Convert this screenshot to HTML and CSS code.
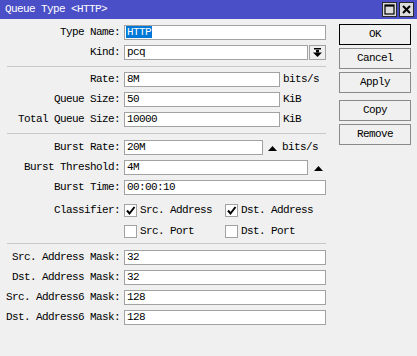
FILE: index.html
```html
<!DOCTYPE html>
<html>
<head>
<meta charset="utf-8">
<link rel="stylesheet" href="styles.css">
</head>
<body>
<div class="window">
  <div class="titlebar">
    <span class="title">Queue Type &lt;HTTP&gt;</span>
    <div class="tb-buttons">
      <span class="tb-btn"><svg width="11" height="11" viewBox="0 0 11 11"><rect x="1" y="1" width="9" height="9" fill="none" stroke="#000" stroke-width="1.2"/><rect x="1" y="1" width="9" height="1.6" fill="#000"/></svg></span>
      <span class="tb-btn"><svg width="11" height="11" viewBox="0 0 11 11"><path d="M2 2 L9 9 M9 2 L2 9" stroke="#000" stroke-width="2"/></svg></span>
    </div>
  </div>
  <div class="content">
    <div class="form">
      <div class="section s1">
        <div class="row"><span class="label">Type Name:</span><div class="input w-full pad-sel"><span class="sel">HTTP</span></div></div>
        <div class="row"><span class="label">Kind:</span><div class="input w-kind">pcq</div><div class="dd-btn"><svg width="9" height="9" viewBox="0 0 9 9"><rect x="1" y="0" width="7" height="1.5" fill="#000"/><rect x="3" y="2" width="3" height="2.5" fill="#000"/><polygon points="0,4.5 9,4.5 4.5,9" fill="#000"/></svg></div></div>
      </div>
      <div class="sep"></div>
      <div class="section s2">
        <div class="row"><span class="label">Rate:</span><div class="input w-rate">8M</div><span class="unit">bits/s</span></div>
        <div class="row"><span class="label">Queue Size:</span><div class="input w-rate">50</div><span class="unit">KiB</span></div>
        <div class="row"><span class="label">Total Queue Size:</span><div class="input w-rate">10000</div><span class="unit">KiB</span></div>
      </div>
      <div class="sep"></div>
      <div class="section s3">
        <div class="row"><span class="label">Burst Rate:</span><div class="input w-brate">20M</div><span class="tri"><svg width="9" height="5" viewBox="0 0 9 5"><polygon points="0,5 9,5 4.5,0" fill="#000"/></svg></span><span class="unit u-after-tri">bits/s</span></div>
        <div class="row"><span class="label">Burst Threshold:</span><div class="input w-kind">4M</div><span class="tri tri2"><svg width="9" height="5" viewBox="0 0 9 5"><polygon points="0,5 9,5 4.5,0" fill="#000"/></svg></span></div>
        <div class="row"><span class="label">Burst Time:</span><div class="input w-full">00:00:10</div></div>
        <div class="row cb-row first-cb"><span class="label">Classifier:</span>
          <div class="checks">
            <span class="check"><span class="box"><svg width="11" height="11" viewBox="0 0 11 11"><path d="M2 5.5 L4.5 8.5 L9.5 2" fill="none" stroke="#000" stroke-width="2"/></svg></span>Src. Address</span>
            <span class="check"><span class="box"><svg width="11" height="11" viewBox="0 0 11 11"><path d="M2 5.5 L4.5 8.5 L9.5 2" fill="none" stroke="#000" stroke-width="2"/></svg></span>Dst. Address</span>
          </div>
        </div>
        <div class="row cb-row second-cb"><span class="label"></span>
          <div class="checks">
            <span class="check"><span class="box"></span>Src. Port</span>
            <span class="check"><span class="box"></span>Dst. Port</span>
          </div>
        </div>
      </div>
      <div class="sep"></div>
      <div class="section s4">
        <div class="row"><span class="label">Src. Address Mask:</span><div class="input w-full">32</div></div>
        <div class="row"><span class="label">Dst. Address Mask:</span><div class="input w-full">32</div></div>
        <div class="row"><span class="label">Src. Address6 Mask:</span><div class="input w-full">128</div></div>
        <div class="row"><span class="label">Dst. Address6 Mask:</span><div class="input w-full">128</div></div>
      </div>
    </div>
    <div class="buttons">
      <div class="btn default">OK</div>
      <div class="btn">Cancel</div>
      <div class="btn">Apply</div>
      <div class="btn gap">Copy</div>
      <div class="btn">Remove</div>
    </div>
  </div>
</div>
</body>
</html>
```
FILE: styles.css
```css
* { box-sizing: border-box; }
html, body { margin: 0; padding: 0; }
body {
  width: 417px;
  height: 356px;
  background: #f0f0f0;
  font-family: "Liberation Mono", monospace;
  font-size: 11px;
  letter-spacing: -0.6px;
  color: #000;
  overflow: hidden;
}
.window { width: 417px; height: 356px; background: #f0f0f0; }
.titlebar {
  height: 19px;
  background: #4b4fc7;
  display: flex;
  align-items: center;
  justify-content: space-between;
  padding-left: 5px;
  padding-right: 3px;
}
.title { color: #fff; line-height: 19px; }
.tb-buttons { display: flex; gap: 2px; }
.tb-btn {
  width: 15px;
  height: 15px;
  border: 1px solid #2a2a2a;
  background: #dcdcdc;
  display: flex;
  align-items: center;
  justify-content: center;
}
.tb-btn svg { display: block; }
.content { display: flex; }
.form { width: 326px; }
.section { display: flex; flex-direction: column; gap: 5px; }
.s1 { padding: 6px 0 6px; }
.s2 { padding: 5px 0 6px; }
.s3 { padding: 6px 0 5px; }
.s4 { padding: 6px 0 0; }
.sep { height: 1px; background: #c8c8c8; margin-left: 7px; }
.row { display: flex; align-items: center; height: 15px; }
.label {
  width: 120px;
  flex: none;
  text-align: right;
  white-space: nowrap;
  margin-right: 4px;
  line-height: 15px;
}
.input {
  height: 15px;
  border: 1px solid #a2a2a2;
  background: #fff;
  padding-left: 2px;
  line-height: 13px;
  white-space: nowrap;
  flex: none;
}
.pad-sel { padding-left: 1px; }
.sel { background: #0078d7; color: #fff; padding: 0 1px; display: inline-block; line-height: 12px; }
.w-full { width: 202px; }
.w-kind { width: 184px; }
.w-rate { width: 156px; }
.w-brate { width: 139px; }
.dd-btn {
  width: 17px;
  height: 15px;
  margin-left: 1px;
  border: 1px solid #a2a2a2;
  background: #f0f0f0;
  display: flex;
  align-items: center;
  justify-content: center;
}
.dd-btn svg { display: block; }
.unit { margin-left: 3px; line-height: 15px; }
.tri { margin-left: 5px; display: flex; align-items: center; padding-top: 1px; }
.tri svg { display: block; }
.tri2 { margin-left: 6px; }
.u-after-tri { margin-left: 5px; }
.cb-row { height: 13px; }
.s3 .first-cb { margin-top: 4px; }
.s3 .second-cb { margin-top: 3px; }
.checks { display: grid; grid-template-columns: 101px 101px; }
.check { display: flex; align-items: center; white-space: nowrap; line-height: 13px; }
.box {
  width: 13px;
  height: 13px;
  border: 1px solid #a2a2a2;
  background: #fff;
  margin-right: 3px;
  display: flex;
  align-items: center;
  justify-content: center;
  flex: none;
}
.box svg { display: block; }
.buttons {
  margin-left: 13px;
  padding-top: 5px;
  display: flex;
  flex-direction: column;
  gap: 3px;
}
.btn {
  width: 72px;
  height: 21px;
  border: 1px solid #8a8a8a;
  background: #f0f0f0;
  text-align: center;
  line-height: 19px;
}
.btn.default { border-color: #000; }
.btn.gap { margin-top: 4px; }
```
